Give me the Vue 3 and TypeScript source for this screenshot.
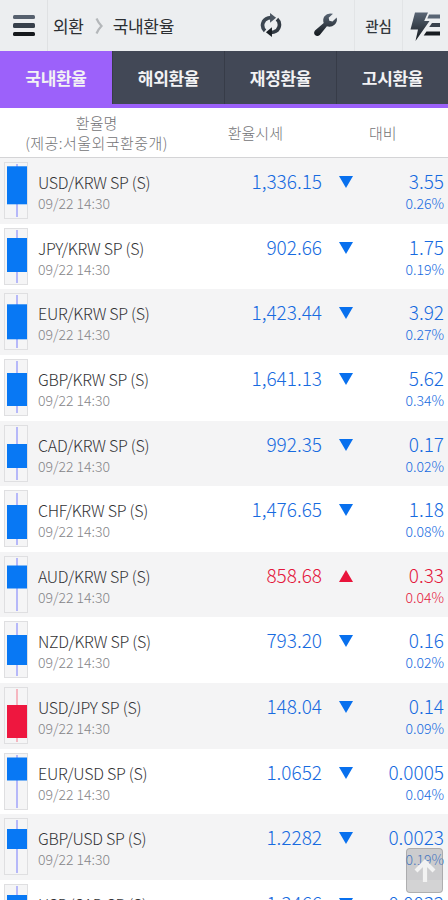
<script setup lang="ts">
interface Rate {
  name: string
  price: string
  diff: string
  pct: string
  up?: boolean
  rising?: boolean
  top: number
  height: number
  wickTop: number
  wickEnd: number
}

const tabs: string[] = ['국내환율', '해외환율', '재정환율', '고시환율']

const rates: Rate[] = [
  { name: 'USD/KRW SP (S)', price: '1,336.15', diff: '3.55', pct: '0.26%', top: 4.3, height: 38, wickTop: 2, wickEnd: 55 },
  { name: 'JPY/KRW SP (S)', price: '902.66', diff: '1.75', pct: '0.19%', top: 10, height: 34, wickTop: 2, wickEnd: 55 },
  { name: 'EUR/KRW SP (S)', price: '1,423.44', diff: '3.92', pct: '0.27%', top: 11.3, height: 35, wickTop: 2, wickEnd: 55 },
  { name: 'GBP/KRW SP (S)', price: '1,641.13', diff: '5.62', pct: '0.34%', top: 14, height: 33, wickTop: 2, wickEnd: 54 },
  { name: 'CAD/KRW SP (S)', price: '992.35', diff: '0.17', pct: '0.02%', top: 19, height: 24, wickTop: 2, wickEnd: 55 },
  { name: 'CHF/KRW SP (S)', price: '1,476.65', diff: '1.18', pct: '0.08%', top: 15, height: 34, wickTop: 3, wickEnd: 55 },
  { name: 'AUD/KRW SP (S)', price: '858.68', diff: '0.33', pct: '0.04%', up: true, top: 9.5, height: 23, wickTop: 2, wickEnd: 55 },
  { name: 'NZD/KRW SP (S)', price: '793.20', diff: '0.16', pct: '0.02%', top: 14, height: 30, wickTop: 2, wickEnd: 55 },
  { name: 'USD/JPY SP (S)', price: '148.04', diff: '0.14', pct: '0.09%', rising: true, top: 18, height: 33, wickTop: 2, wickEnd: 55 },
  { name: 'EUR/USD SP (S)', price: '1.0652', diff: '0.0005', pct: '0.04%', top: 4.5, height: 23, wickTop: 2, wickEnd: 55 },
  { name: 'GBP/USD SP (S)', price: '1.2282', diff: '0.0023', pct: '0.19%', top: 11, height: 20, wickTop: 2, wickEnd: 55 },
  { name: 'USD/CAD SP (S)', price: '1.3466', diff: '0.0032', pct: '0.16%', top: 11, height: 30, wickTop: 2, wickEnd: 55 },
]
</script>

<template>
  <div class="screen">
    <header class="bar">
      <button class="menu" aria-label="메뉴"><i></i><i></i><i></i></button>
      <div class="crumbs">
        <span>외환</span>
        <svg width="9" height="18" viewBox="0 0 9 18"><path d="M1.5 1.5 Q3.5 6 6.5 9 Q3.5 12 1.5 16.5" fill="none" stroke="#b4b7ba" stroke-width="2.2" /></svg>
        <span>국내환율</span>
      </div>
      <svg class="refresh" width="22" height="24" viewBox="0 0 24 26">
        <defs><linearGradient id="steel" x1="0" y1="0" x2="0" y2="1"><stop offset="0" stop-color="#596574" /><stop offset="1" stop-color="#14191e" /></linearGradient></defs>
        <g fill="none" stroke-width="4">
          <path d="M5.5 19.3 A8.2 8.2 0 0 1 9 5.3 L12 5" stroke="#3c4651" />
          <path d="M18.5 6.7 A8.2 8.2 0 0 1 15 20.7 L12 21" stroke="#333b44" />
        </g>
        <path d="M11 0 L17.5 5 L11 10.5Z" fill="#4b5561" />
        <path d="M13 26 L6.5 21 L13 15.5Z" fill="#191f25" />
      </svg>
      <svg class="wrench" width="26" height="26" viewBox="0 0 26 26">
        <path fill="url(#steel)" d="M20 1.8 Q14.5 .3 11.5 4.2 Q9.4 7.2 10.7 11 L2 18.6 Q.2 21 2 23 Q4.3 25 6.8 22.9 L13.9 14.3 Q18.3 15.5 21.5 12.8 Q24.7 9.7 23.7 5.5 L19.5 9.6 L16.3 8.8 L15.7 5.8Z" />
      </svg>
      <button class="fav">관심</button>
      <svg class="quick" width="32" height="30" viewBox="0 0 32 30">
        <path fill="url(#steel)" d="M5 .5 H18 L14.2 9 H19.5 L5.5 29 L8 17.5 H.5Z" />
        <g><path fill="#596574" d="M19 2.5 H30 V6.5 H17.3Z" /><path fill="#39424d" d="M22 11 H30 V15 H19.2Z" /><path fill="#171b20" d="M16.5 19.5 H30 V23.5 H13.7Z" /></g>
      </svg>
    </header>
    <nav class="tabs">
      <button v-for="(tab, i) in tabs" :key="tab" :class="{ active: i === 0 }">{{ tab }}</button>
    </nav>
    <div class="head">
      <div class="h-name">환율명<br /><span>(제공:서울외국환중개)</span></div>
      <div class="h-price">환율시세</div>
      <div class="h-diff">대비</div>
    </div>
    <main>
      <div v-for="rate in rates" :key="rate.name" class="row" :class="{ up: rate.up }">
        <svg class="candle" :class="{ rising: rate.rising }" width="24" height="57" viewBox="0 0 24 57">
          <rect class="frame" x=".5" y=".5" width="23" height="56" />
          <path class="wick" :d="`M13 ${rate.wickTop} V${rate.wickEnd}`" />
          <rect class="body" x="3" :y="rate.top" width="20" :height="rate.height" />
        </svg>
        <div class="pair"><div class="name">{{ rate.name }}</div><div class="time">09/22 14:30</div></div>
        <div class="price">{{ rate.price }}</div>
        <svg class="arrow" width="14" height="12" viewBox="0 0 14 12"><path :d="rate.up ? 'M0 12 H14 L7 0Z' : 'M0 0 H14 L7 12Z'" /></svg>
        <div class="change"><div class="diff">{{ rate.diff }}</div><div class="pct">{{ rate.pct }}</div></div>
      </div>
    </main>
    <button class="to-top" aria-label="맨 위로">
      <svg width="24" height="26" viewBox="0 0 24 26"><path d="M12 24 V5 M3 13 L12 4 L21 13" fill="none" stroke="#f2f2f2" stroke-width="4.2" /></svg>
    </button>
  </div>
</template>

<style>
body { margin: 0; overflow: hidden; }
</style>

<style scoped>
.screen { position: relative; width: 448px; height: 900px; overflow: hidden; background: #fff; font-family: "Noto Sans CJK KR", sans-serif; font-weight: 300; }
button { border: 0; padding: 0; background: none; font: inherit; }
.bar { display: flex; align-items: center; height: 51px; background: #eceef0; color: #2c2f33; }
.menu { display: flex; flex-direction: column; align-items: center; justify-content: center; gap: 4px; width: 48px; height: 51px; box-sizing: border-box; border-right: 1px solid #dfe1e3; }
.menu i { width: 22px; height: 4.5px; border-radius: 1.5px; background: #56606e; }
.menu i:nth-child(2) { background: #363f4a; }
.menu i:nth-child(3) { background: #15181c; }
.crumbs { display: flex; align-items: center; width: 207px; padding-left: 5px; font-size: 17px; font-weight: 400; letter-spacing: -.3px; }
.crumbs svg { margin: 0 9px 0 11px; }
.refresh { margin: 0 31px 2px 0; }
.wrench { margin: 0 15px 1px 0; }
.fav { width: 49px; height: 51px; box-sizing: border-box; border: solid #e2e4e6; border-width: 0 1px; color: #33383e; font-size: 14.5px; font-weight: 500; }
.quick { margin: 2px 0 0 7px; }
.tabs { display: grid; grid-template-columns: repeat(4, 1fr); height: 53px; border-bottom: 4px solid #9c61fa; background: #424856; }
.tabs button { padding-bottom: 1px; color: #f2f2f4; font-size: 17px; font-weight: 700; letter-spacing: -.3px; border-left: 1px solid #373c48; }
.tabs .active { background: #9c61fa; border: 0; box-shadow: 0 4px #9c61fa; }
.head { display: flex; align-items: center; height: 50px; box-sizing: border-box; border-bottom: 1px solid #d4d4d6; color: #737376; font-size: 15px; line-height: 20px; text-align: center; letter-spacing: 0; }
.h-name { width: 194px; }
.h-name span { letter-spacing: .45px; }
.h-price { width: 125px; }
.h-diff { width: 131px; }
.row { display: flex; align-items: flex-start; height: 65.64px; box-sizing: border-box; padding: 4px 4px 0; background: #fff; color: #176be0; }
.row:nth-child(odd) { background: #f4f4f5; }
.row.up { color: #e4183d; }
.candle { flex: none; }
.frame { fill: #f5f5f6; stroke: #dfdfe1; }
.wick { stroke: #a0a3fa; stroke-width: 1.5; }
.body { fill: #0878f4; }
.rising .wick { stroke: #f4a0ae; }
.rising .body { fill: #ee173f; }
.pair { width: 150px; padding: 9px 0 0 10px; }
.name { color: #333335; font-size: 16px; line-height: 22px; letter-spacing: -.28px; white-space: nowrap; }
.time { padding-top: 1px; color: #858588; font-size: 14px; line-height: 18px; }
.price { width: 134px; padding-top: 7px; font-size: 19px; line-height: 24px; text-align: right; }
.arrow { margin: 14px 0 0 16.5px; fill: #0870ee; }
.up .arrow { fill: #e9143b; }
.change { flex: 1; padding-top: 7px; text-align: right; }
.diff { font-size: 19px; line-height: 24px; }
.pct { padding-top: 1px; font-size: 14px; line-height: 18px; }
.to-top { position: absolute; left: 406px; top: 848px; display: grid; place-items: center; width: 37px; height: 45px; border: 1px solid rgba(130,130,132,.45); border-radius: 4px; background: rgba(140,140,142,.38); box-sizing: border-box; }
</style>
